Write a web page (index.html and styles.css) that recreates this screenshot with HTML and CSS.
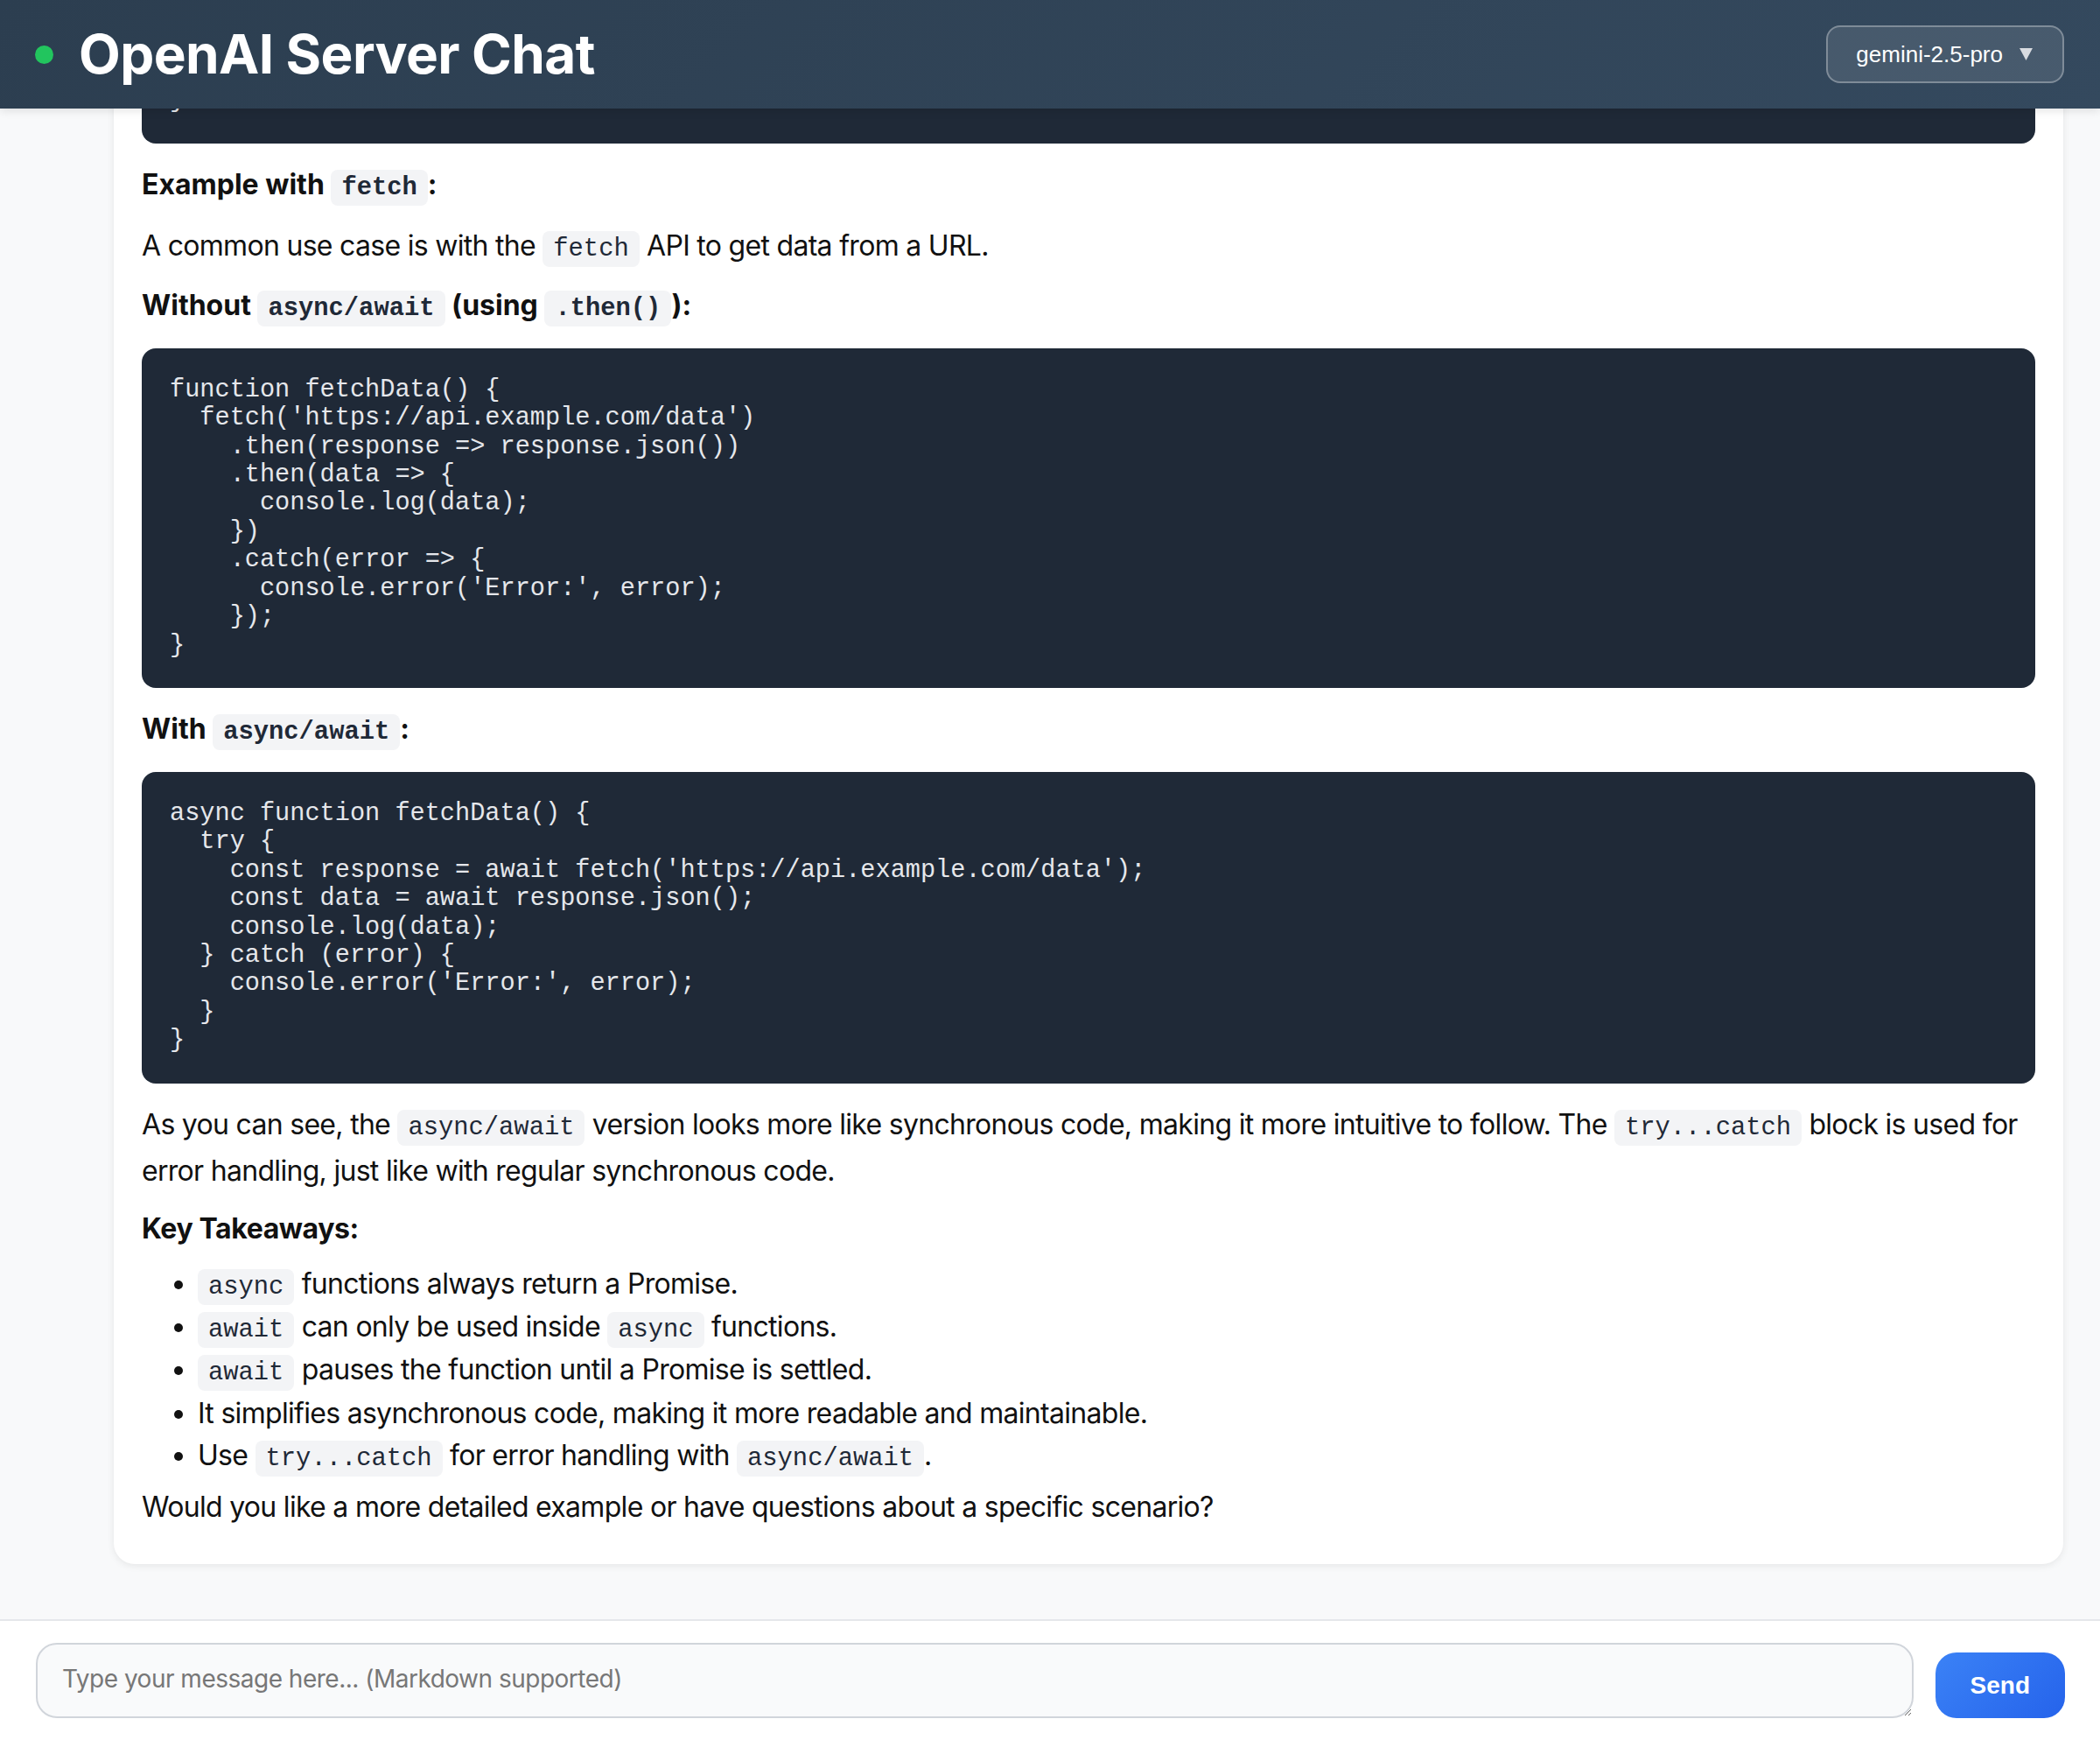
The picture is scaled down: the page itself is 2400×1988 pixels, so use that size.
FILE: index.html
```html
<!DOCTYPE html>
<html lang="en">
<head>
<meta charset="utf-8">
<title>OpenAI Server Chat</title>
<link rel="stylesheet" href="styles.css">
</head>
<body>
<div class="app">
  <header class="topbar">
    <div class="brand">
      <span class="status-dot"></span>
      <h1 class="title">OpenAI Server Chat</h1>
    </div>
    <div class="model-select">
      <span class="model-name">gemini-2.5-pro</span>
      <svg class="caret" width="15" height="14" viewBox="0 0 15 14" aria-hidden="true"><path d="M0 0H15L7.5 14Z" fill="#d8dbe0"/></svg>
    </div>
  </header>

  <main class="chat">
    <div class="chat-inner">
      <div class="message assistant">
        <div class="md">
          <h3>Basic syntax:</h3>
<pre><code>async function myFunction() {
  const result = await someAsyncOperation();
  return result;
}</code></pre>
          <h3>Example with <code>fetch</code>:</h3>
          <p>A common use case is with the <code>fetch</code> API to get data from a URL.</p>
          <h3>Without <code>async/await</code> (using <code>.then()</code>):</h3>
<pre><code>function fetchData() {
  fetch('https://api.example.com/data')
    .then(response =&gt; response.json())
    .then(data =&gt; {
      console.log(data);
    })
    .catch(error =&gt; {
      console.error('Error:', error);
    });
}</code></pre>
          <h3>With <code>async/await</code>:</h3>
<pre><code>async function fetchData() {
  try {
    const response = await fetch('https://api.example.com/data');
    const data = await response.json();
    console.log(data);
  } catch (error) {
    console.error('Error:', error);
  }
}</code></pre>
          <p>As you can see, the <code>async/await</code> version looks more like synchronous code, making it more intuitive to follow. The <code>try...catch</code> block is used for error handling, just like with regular synchronous code.</p>
          <h4>Key Takeaways:</h4>
          <ul>
            <li><code>async</code> functions always return a Promise.</li>
            <li><code>await</code> can only be used inside <code>async</code> functions.</li>
            <li><code>await</code> pauses the function until a Promise is settled.</li>
            <li>It simplifies asynchronous code, making it more readable and maintainable.</li>
            <li>Use <code>try...catch</code> for error handling with <code>async/await</code>.</li>
          </ul>
          <p>Would you like a more detailed example or have questions about a specific scenario?</p>
        </div>
      </div>
    </div>
  </main>

  <footer class="composer">
    <textarea class="input" placeholder="Type your message here... (Markdown supported)"></textarea>
    <button class="send" type="button">Send</button>
  </footer>
</div>
</body>
</html>
```

FILE: styles.css
```css
* {
  box-sizing: border-box;
}

html,
body {
  margin: 0;
  height: 100%;
}

body {
  font-family: Inter, "Noto Sans", sans-serif;
  color: #111111;
  background: #f8f9fa;
}

.app {
  display: flex;
  flex-direction: column;
  height: 100vh;
}

/* ---------- header ---------- */
.topbar {
  position: relative;
  z-index: 1;
  flex: none;
  height: 124px;
  display: flex;
  align-items: center;
  justify-content: space-between;
  padding: 0 41px 0 40px;
  background: linear-gradient(135deg, #2c3e50 0%, #34495e 100%);
  box-shadow: 0 2px 10px rgba(0, 0, 0, 0.12);
}

.brand {
  display: flex;
  align-items: center;
  gap: 29px;
}

.status-dot {
  width: 21px;
  height: 21px;
  border-radius: 50%;
  background: #22c55e;
}

.title {
  margin: 0;
  font-size: 62px;
  font-weight: 700;
  line-height: 1.25;
  letter-spacing: -0.6px;
  color: #ffffff;
}

.model-select {
  display: flex;
  align-items: center;
  gap: 19px;
  height: 66px;
  padding: 0 34px 0 32px;
  border: 2px solid rgba(255, 255, 255, 0.3);
  border-radius: 16px;
  background: rgba(255, 255, 255, 0.1);
  font-family: "Liberation Sans", Arial, sans-serif;
  font-size: 26px;
  color: #ffffff;
}

.caret {
  display: block;
}

/* ---------- chat area ---------- */
.chat {
  flex: 1;
  min-height: 0;
  overflow-y: auto;
  display: flex;
  flex-direction: column-reverse;
  scrollbar-width: none;
}

.chat-inner {
  display: flex;
  flex-direction: column;
  gap: 40px;
  padding: 40px 42px 63px;
}

.message {
  border-radius: 24px;
  padding: 32px;
}

.message.assistant {
  margin-left: 88px;
  background: #ffffff;
  box-shadow: 0 2px 8px rgba(0, 0, 0, 0.08);
}

/* ---------- markdown ---------- */
.md {
  font-size: 32px;
  line-height: 1.6;
  color: #111111;
}

.md > :first-child {
  margin-top: 0;
}

.md > :last-child {
  margin-bottom: 8px;
}

.md p,
.md li {
  letter-spacing: -0.7px;
}

.md p {
  margin: 8px 0;
}

.md h3 {
  margin: 15px 0 17px;
  font-size: 32px;
  font-weight: 700;
  line-height: 1.6;
}

.md h4 {
  margin: 15px 0 14px;
  font-size: 32px;
  font-weight: 700;
  line-height: 1.6;
  letter-spacing: -0.4px;
}

.md ul {
  margin: 8px 0;
  padding-left: 64px;
}

.md li {
  line-height: 1.5;
}

.md code {
  font-family: "Liberation Mono", "Courier New", monospace;
  font-size: 0.9em;
  letter-spacing: 0;
  padding: 4px 12px;
  border-radius: 8px;
  background: #f3f4f6;
  color: #1f2937;
}

.md pre {
  margin: 22px 0 21px;
  padding: 32px;
  border-radius: 16px;
  background: #1f2937;
  font-family: "Liberation Mono", "Courier New", monospace;
  font-size: 28.6px;
  line-height: 32.4px;
  overflow-x: auto;
}

.md pre code {
  font-size: inherit;
  line-height: inherit;
  padding: 0;
  border-radius: 0;
  background: none;
  color: #e5e7eb;
}

/* ---------- composer ---------- */
.composer {
  flex: none;
  display: flex;
  align-items: flex-end;
  gap: 25px;
  padding: 25px 40px 25px 41px;
  background: #ffffff;
  border-top: 2px solid #e5e7eb;
}

.input {
  flex: 1;
  height: 86px;
  padding: 22px 28px 20px;
  border: 2px solid #d1d5db;
  border-radius: 24px;
  background: #f9fafb;
  font-family: Inter, "Noto Sans", sans-serif;
  font-size: 28px;
  letter-spacing: -0.5px;
  line-height: normal;
  color: #111111;
  resize: vertical;
  outline: none;
}

.input::placeholder {
  color: #777777;
}

.send {
  flex: none;
  height: 75px;
  padding: 0 40px;
  border: none;
  border-radius: 24px;
  background: linear-gradient(135deg, #3b82f6 0%, #2563eb 100%);
  font-family: "Liberation Sans", Arial, sans-serif;
  font-size: 28px;
  font-weight: 700;
  color: #ffffff;
}
```
